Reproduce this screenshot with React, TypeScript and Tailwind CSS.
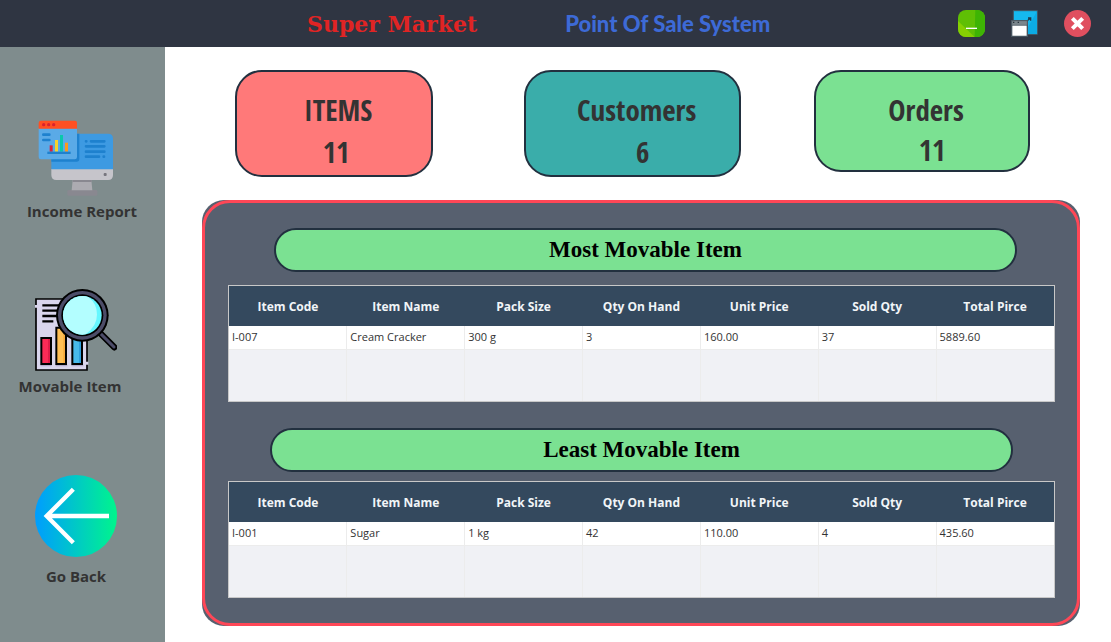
import type { ReactNode } from "react";

type Row = string[];

const COLUMNS = ["Item Code", "Item Name", "Pack Size", "Qty On Hand", "Unit Price", "Sold Qty", "Total Pirce"];

const MOST: Row[] = [["I-007", "Cream Cracker", "300 g", "3", "160.00", "37", "5889.60"]];
const LEAST: Row[] = [["I-001", "Sugar", "1 kg", "42", "110.00", "4", "435.60"]];

function IncomeIcon() {
  return (
    <svg className="h-[76px] w-[76px]" viewBox="115 60 228 228" aria-hidden="true">
      <rect x="203" y="270" width="90" height="17" rx="4" fill="#898890" />
      <path d="M219 240h56l3 31h-62z" fill="#acabb1" />
      <path d="M219 240h57v6h-57z" fill="#898890" />
      <path d="M155 207h185v18q0 15-15 15H170q-15 0-15-15z" fill="#c6c5cb" />
      <path d="M155 116q0-15 15-15h155q15 0 15 15v92H155z" fill="#3d9ae2" />
      <path d="M155 101h84v76q0 8-8 8h-76z" fill="#1e81ce" />
      <rect x="312" y="219" width="9" height="9" rx="3" fill="#77767e" />
      <g stroke="#1e81ce" strokeWidth="8" strokeLinecap="round">
        <path d="M259 124h1M274 124h40M259 139h55M259 155h55M259 170h39M312 170h1" />
      </g>
      <path d="M117 85h115v86q0 7-7 7H124q-7 0-7-7z" fill="#5aaae7" />
      <path d="M117 86V69q0-7 7-7h101q7 0 7 7v17z" fill="#ff5023" />
      <g fill="#d9232e">
        <circle cx="132" cy="74" r="5" />
        <circle cx="147" cy="74" r="5" />
        <circle cx="162" cy="74" r="5" />
      </g>
      <path d="M131 104h18M131 120h18" stroke="#1e81ce" strokeWidth="8" strokeLinecap="round" />
      <path d="M150 136h9v19h-9z" fill="#d9233d" />
      <path d="M166 120h9v35h-9z" fill="#f7d32f" />
      <path d="M181 105h9v50h-9z" fill="#0ac8ab" />
      <path d="M196 128h9v27h-9z" fill="#fb9a1c" />
      <path d="M143 155h70v7h-70z" fill="#1e81ce" />
    </svg>
  );
}

function MovableIcon() {
  return (
    <svg className="size-[82px]" viewBox="105 27 246 246" aria-hidden="true">
      <path d="M108 57h153v213H108z" fill="#d9d5ec" stroke="#000" strokeWidth="5" />
      <path d="M105 75h7v8h-7zM257 245h8v9h-8z" fill="#d9d5ec" />
      <path d="M127 76h50M127 92h46M127 108h46M127 124h33" stroke="#000" strokeWidth="7" />
      <path d="M121 256h34M167 256h35M214 256h36" stroke="#b4adcf" strokeWidth="5" />
      <g stroke="#000" strokeWidth="6">
        <path d="M124 174h29v78h-29z" fill="#fb2b56" />
        <path d="M169 143h29v109h-29z" fill="#ffbf55" />
        <path d="M217 160h29v92h-29z" fill="#48b9ea" />
      </g>
      <path d="M144 177h6v72h-6z" fill="#e11d48" />
      <path d="M190 146h5v103h-5z" fill="#f5a93c" />
      <path d="M237 163h6v86h-6z" fill="#2f9fdc" />
      <path d="m301 160 42 42" stroke="#000" strokeWidth="19" strokeLinecap="round" />
      <path d="m301 160 41 41" stroke="#4c4c68" strokeWidth="9" strokeLinecap="round" />
      <circle cx="247" cy="106" r="79" fill="#000" />
      <circle cx="247" cy="106" r="73" fill="#4c4c68" />
      <circle cx="247" cy="106" r="63" fill="#000" />
      <circle cx="247" cy="106" r="58" fill="#66f7ff" />
      <path d="M189 106a58 58 0 0 1 76-55q26 20 26 52 0 36-34 60a58 58 0 0 1-68-57z" fill="#b3feff" />
    </svg>
  );
}

function BackIcon() {
  return (
    <svg className="size-[82px]" viewBox="105 30 246 246" aria-hidden="true">
      <defs>
        <linearGradient id="back-fill">
          <stop offset="0" stopColor="#009dff" />
          <stop offset="1" stopColor="#00f58c" />
        </linearGradient>
      </defs>
      <circle cx="228" cy="153" r="123" fill="url(#back-fill)" />
      <path d="M220 73l-80 80 80 80M140 153h187" fill="none" stroke="#fff" strokeWidth="13" />
    </svg>
  );
}

function MinimizeIcon() {
  return (
    <svg className="size-[27px]" viewBox="0 0 81 81" aria-hidden="true">
      <defs>
        <clipPath id="min-shape">
          <rect width="81" height="81" rx="24" />
        </clipPath>
      </defs>
      <g clipPath="url(#min-shape)">
        <path d="M0 0h81v81H0z" fill="#5fbf05" />
        <path d="M0 33l50 48H0z" fill="#86cf02" />
        <path d="M52 0h29v81H50z" fill="#3eb404" />
      </g>
      <path d="M24 55h33" stroke="#fff" strokeWidth="4" />
    </svg>
  );
}

function RestoreIcon() {
  return (
    <svg className="size-[27px]" viewBox="0 0 81 81" aria-hidden="true">
      <path d="M7 2h72v71H7z" fill="#15b9ef" stroke="#435663" strokeWidth="3" />
      <path d="M78 4v68H40z" fill="#0cabe4" />
      <path d="M51 31l7-7M51 24h8v8" fill="none" stroke="#203b4b" strokeWidth="4" />
      <path d="M2 32h47v47H2z" fill="#fff" stroke="#46535e" strokeWidth="4" />
      <path d="M2 32h47v14H2z" fill="#7b868c" stroke="#46535e" strokeWidth="2" />
      <path d="M6 37h4M20 37h4" stroke="#26313a" strokeWidth="4" />
    </svg>
  );
}

function CloseIcon() {
  return (
    <svg className="size-[27px]" viewBox="0 0 81 81" aria-hidden="true">
      <circle cx="40.5" cy="40.5" r="40.5" fill="#e04f5f" />
      <path d="M25 25l31 31M56 25L25 56" stroke="#fff" strokeWidth="12" />
    </svg>
  );
}

function NavButton({ icon, label, className }: { icon: ReactNode; label: string; className: string }) {
  return (
    <button type="button" className="flex w-full flex-col items-center gap-[5px] text-[15px] leading-5 font-bold text-[#333]">
      {icon}
      <span className={className}>{label}</span>
    </button>
  );
}

function StatCard({ label, value, className, valueClass }: { label: string; value: string; className: string; valueClass: string }) {
  return (
    <section
      className={`rounded-[27px] border-2 border-[#22303f] pt-[17px] pb-[2px] text-center font-['Agency_FB','Open_Sans_Condensed','Liberation_Sans_Narrow',sans-serif] text-[29px] font-bold text-[#333] ${className}`}
    >
      <h2 className="pl-2 leading-[42px]">{label}</h2>
      <p className={valueClass}>{value}</p>
    </section>
  );
}

function Banner({ children, className }: { children: string; className: string }) {
  return (
    <h2
      className={`rounded-full border-2 border-[#22303f] bg-[#7be192] text-center font-['Bodoni_MT','Liberation_Serif',serif] text-[23px] leading-10 font-bold text-black ${className}`}
    >
      {children}
    </h2>
  );
}

function ItemTable({ rows, label, className }: { rows: Row[]; label: string; className: string }) {
  return (
    <div className={`border border-[#c8c8c8] ${className}`}>
      <table aria-label={label} className="w-full table-fixed border-collapse text-[#333]">
        <thead>
          <tr className="h-10 bg-[#34495e] text-[12px] text-[#f1f5f8]">
            {COLUMNS.map((column) => (
              <th key={column} scope="col" className="px-0 pt-[2px] pb-0 font-bold">
                {column}
              </th>
            ))}
          </tr>
        </thead>
        <tbody>
          {rows.map((row) => (
            <tr key={row[0]} className="h-[23px] bg-white text-[11px]">
              {row.map((cell, i) => (
                <td key={COLUMNS[i]} className="border-r border-b border-[#ececec] px-[3px] py-0 leading-5 last:border-r-0">
                  {cell}
                </td>
              ))}
            </tr>
          ))}
          <tr className="h-[52px] bg-[#f0f1f5]">
            {COLUMNS.map((column) => (
              <td key={column} className="border-r border-[#ececec] p-0 last:border-r-0" />
            ))}
          </tr>
        </tbody>
      </table>
    </div>
  );
}

export default function App() {
  return (
    <div className="flex min-h-screen flex-col bg-white font-['Segoe_UI','Open_Sans','Noto_Sans',sans-serif]">
      <header className="flex h-[47px] items-center bg-[#2f3542] pr-5 pl-[307px]">
        <h1 className="font-['Bodoni_MT_Black','DejaVu_Serif',serif] text-[22px] leading-[44px] font-bold whitespace-nowrap text-[#e02424]">
          Super Market
        </h1>
        <p className="ml-[88px] font-['Berlin_Sans_FB_Demi','Lato',sans-serif] text-[22px] leading-[44px] font-black whitespace-nowrap text-[#3d6ad6]">
          Point Of Sale System
        </p>
        <div className="ml-auto flex items-center gap-[26px]">
          <button type="button" aria-label="Minimize">
            <MinimizeIcon />
          </button>
          <button type="button" aria-label="Restore">
            <RestoreIcon />
          </button>
          <button type="button" aria-label="Close">
            <CloseIcon />
          </button>
        </div>
      </header>

      <div className="flex flex-1">
        <nav className="flex w-[165px] shrink-0 flex-col bg-[#7f8c8d] pt-[73px] pr-[13px]">
          <NavButton icon={<IncomeIcon />} label="Income Report" className="pl-3" />
          <div className="h-[68px]" />
          <NavButton icon={<MovableIcon />} label="Movable Item" className="pr-3" />
          <div className="h-[79px]" />
          <NavButton icon={<BackIcon />} label="Go Back" className="pt-1" />
        </nav>

        <main className="flex-1 pt-[23px] pr-[31px] pb-4 pl-[37px]">
          <div className="flex h-[130px] items-start pr-[50px] pl-[33px]">
            <StatCard label="ITEMS" value="11" className="mr-[91px] flex-[198_1_0] bg-[#ff7979]" valueClass="pl-1 leading-[42px]" />
            <StatCard label="Customers" value="6" className="mr-[73px] flex-[217_1_0] bg-[#3aadaa]" valueClass="pl-5 leading-[42px]" />
            <StatCard label="Orders" value="11" className="flex-[216_1_0] bg-[#7be192]" valueClass="pl-5 leading-[37px]" />
          </div>

          <div className="rounded-[22px] bg-[#57606f]">
            <div className="rounded-[28px] border-[3px] border-[#ff4757] py-[25px] pr-[22px] pl-[23px]">
              <Banner className="mr-[38px] ml-[46px]">Most Movable Item</Banner>
              <ItemTable rows={MOST} label="Most Movable Item" className="mt-[13px]" />
              <Banner className="mt-[26px] mr-[42px] ml-[42px]">Least Movable Item</Banner>
              <ItemTable rows={LEAST} label="Least Movable Item" className="mt-[9px]" />
            </div>
          </div>
        </main>
      </div>
    </div>
  );
}
